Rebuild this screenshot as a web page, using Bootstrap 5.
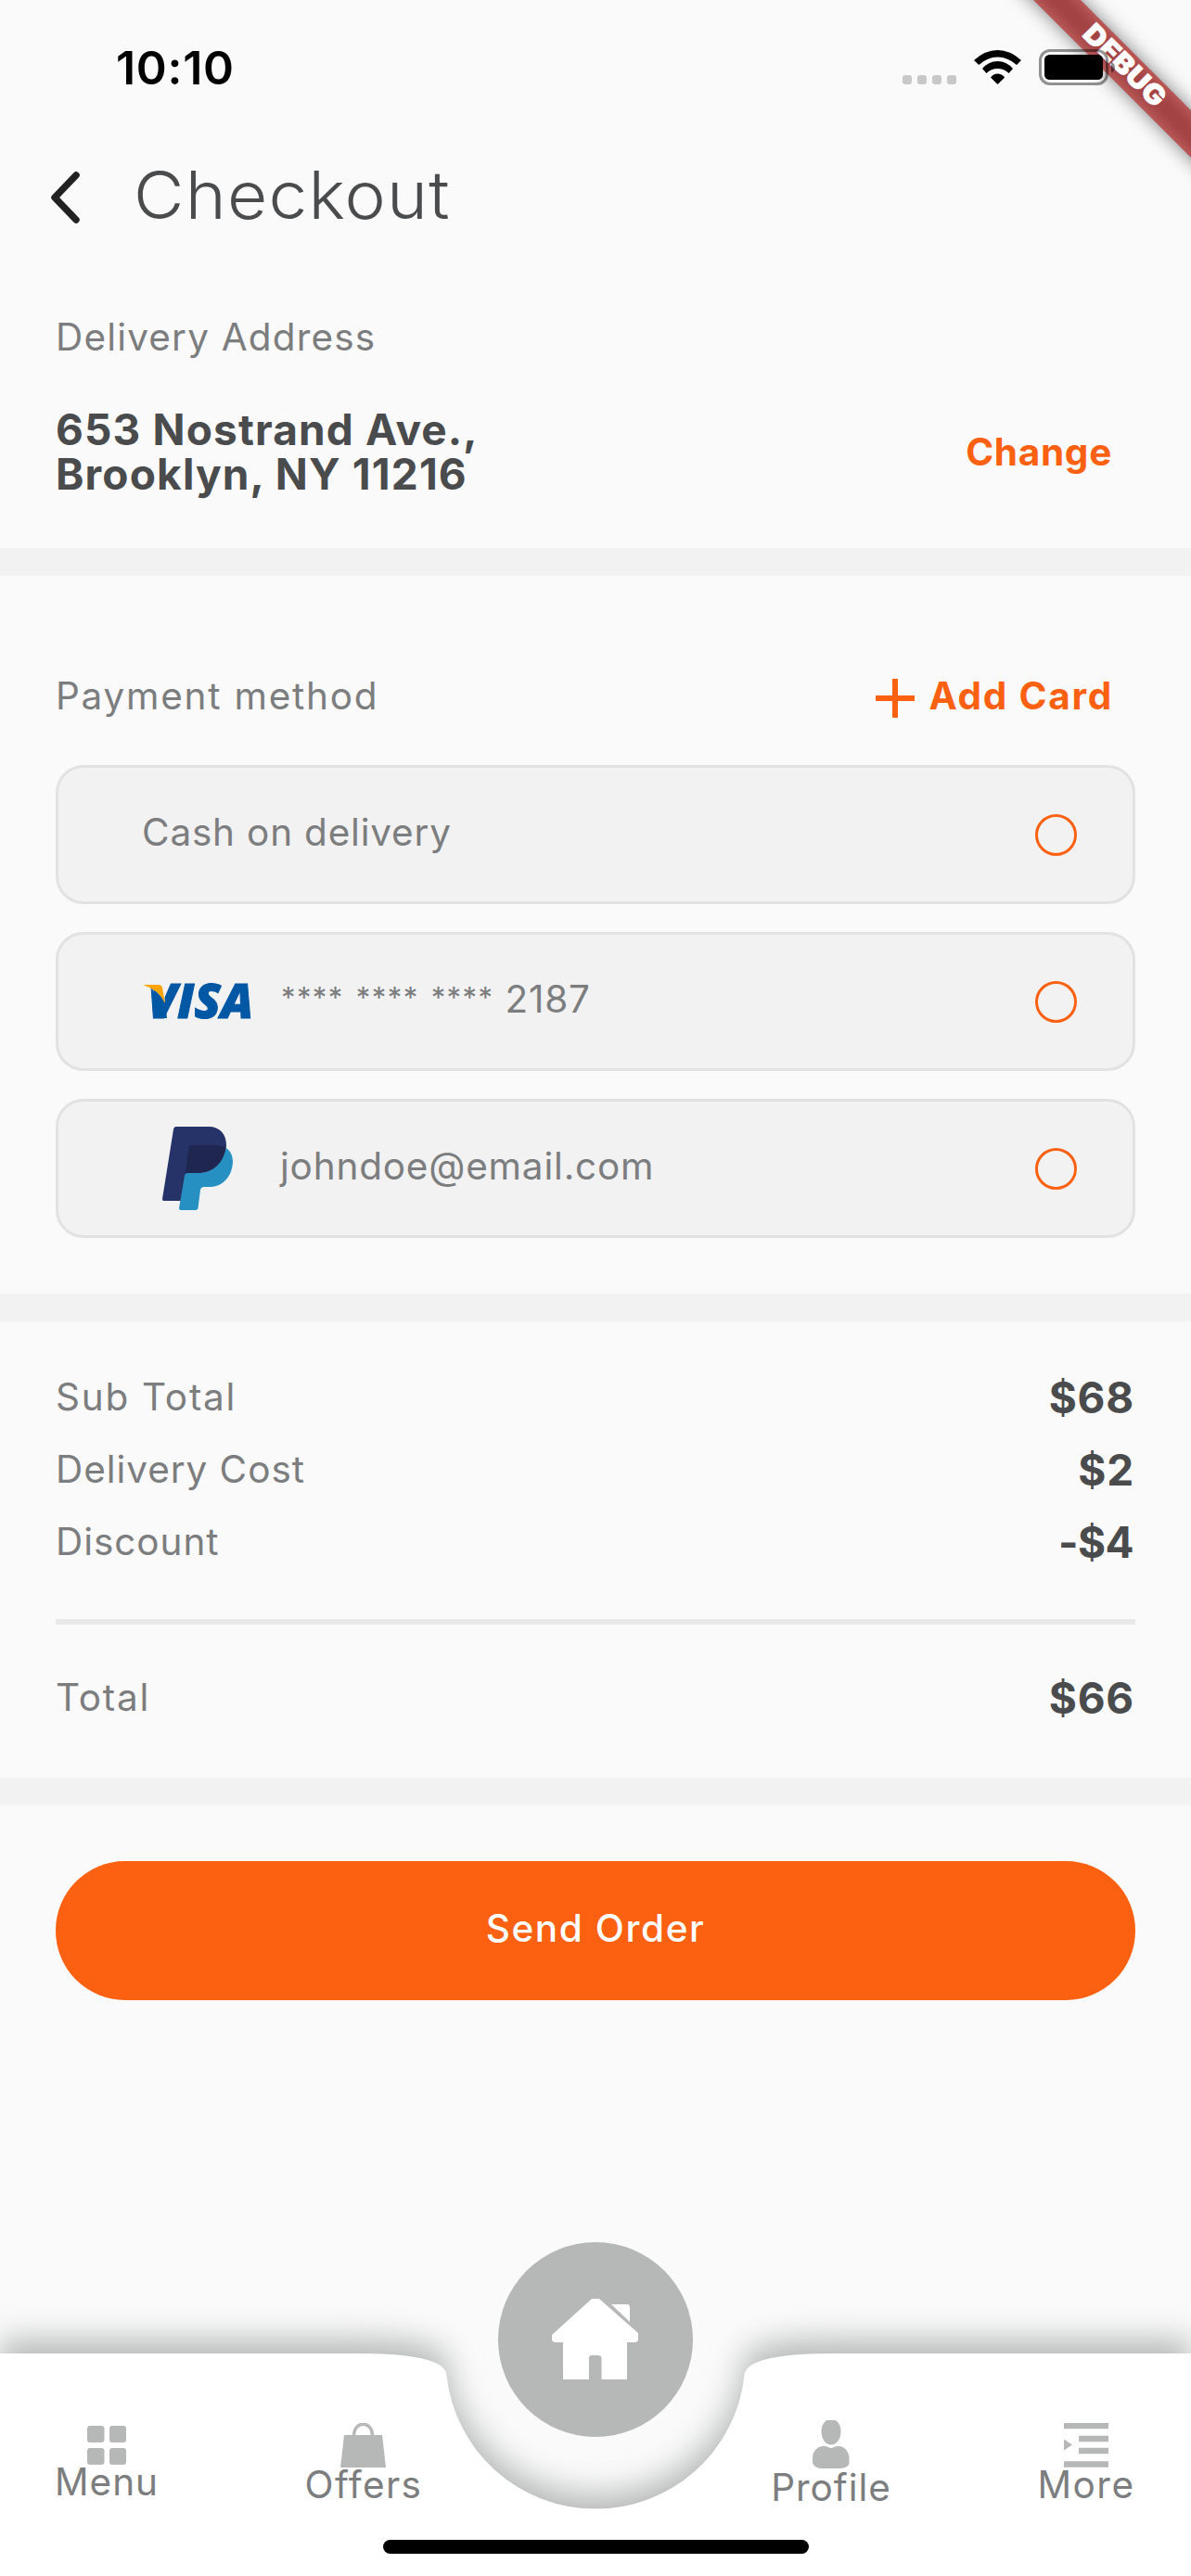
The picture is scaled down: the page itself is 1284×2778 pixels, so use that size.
<!DOCTYPE html>
<html lang="en">
<head>
<meta charset="utf-8">
<title>Checkout</title>
<link href="https://cdn.jsdelivr.net/npm/bootstrap@5.3.0/dist/css/bootstrap.min.css" rel="stylesheet">
<style>
  body { background: #fafafa; color: #7c7d7e; font-family: Inter, "Open Sans", sans-serif; font-size: 40.5px; line-height: 43px; letter-spacing: .95px; }
  .screen { width: 1284px; height: 2778px; white-space: nowrap; }
  svg { display: block; flex: none; }
  .ink { color: #4a4b4d; }
  .accent { color: #fc6011; }
  .strong-line { font-size: 46px; line-height: 48px; font-weight: 700; letter-spacing: 1.15px; }
  .track-1 { letter-spacing: 1.18px; }
  .track-2 { letter-spacing: 1.75px; }

  .statusbar { height: 140px; padding: 0 82px 0 125px; color: #000; z-index: 3; }
  .clock { font-size: 50px; font-weight: 600; line-height: 146px; letter-spacing: .7px; }
  .status-icons { padding-top: 53px; }
  .debug-ribbon { z-index: 2; }

  .titlebar { height: 140px; padding-left: 52px; }
  .back-icon { margin-top: 6px; }
  .title-text { font-size: 71.5px; font-weight: 350; line-height: 142px; letter-spacing: 1.2px; margin: 0 0 0 58px; transform: scaleX(1.045); transform-origin: left center; }

  .pad { padding-left: 60px; padding-right: 60px; }
  .address { height: 311px; padding-top: 62px; }
  .address-row { margin-top: 54px; }
  .change-link { letter-spacing: .7px; padding-right: 25px; }
  .band { height: 30px; background: #f2f2f2; }

  .payment { height: 774px; padding-top: 102px; }
  .payment-head { height: 60px; margin-bottom: 42px; padding-right: 24px; }
  .lift { padding-bottom: 5px; }
  .cards { gap: 30px; }
  .pay-card { height: 150px; border: 3px solid #e2e2e2; border-radius: 30px; background: #f2f2f2; padding: 0 60px 0 90px; }
  .pay-card .lift { letter-spacing: .8px; }
  .ring { width: 45px; height: 45px; border: 3px solid #fc6011; border-radius: 50%; }
  .visa-logo { overflow: visible; }
  .visa-label { margin-left: 28px; }
  .stars { font-size: 31px; letter-spacing: 1.4px; word-spacing: 3px; vertical-align: 5px; line-height: 30px; margin-right: 12px; }
  .paypal-logo { margin-left: 22px; }
  .paypal-label { margin-left: 51px; }

  .totals { height: 492px; padding-top: 42px; }
  .total-row { height: 78px; }
  .amount { font-size: 46px; font-weight: 700; color: #4a4b4d; padding: 3px 1px 0 0; letter-spacing: .8px; }
  .amount-off { letter-spacing: -.6px; padding-right: 2px; }
  .rule { height: 6px; background: #e8e8e8; margin: 45px 0 39px; }

  .send { margin-top: 60px; height: 150px; border-radius: 75px; border: 0; background: #fc6011; color: #fff; font-size: 40.5px; font-weight: 500; letter-spacing: 1.6px; }
  .send .lift { padding-bottom: 4px; }

  .tabbar { height: 240px; }
  .tabbar-shape { position: absolute; left: 0; bottom: 0; }
  .home-button { position: absolute; left: 537px; top: -120px; width: 210px; height: 210px; border-radius: 50%; background: #b6b7b7; }
  .tabs { position: relative; padding: 72px 60px 0 59px; }
  .tabs-left { gap: 157px; }
  .tabs-right { gap: 157px; }
  .tab-item { line-height: 42px; }
  .tab-menu { width: 112px; padding-top: 6px; }
  .tab-offers { width: 128px; padding-top: 3px; letter-spacing: 1.39px; }
  .tab-profile { width: 130px; }
  .tab-more { width: 106px; padding-top: 3px; letter-spacing: 1.5px; }
  .tab-item svg { margin-bottom: -2px; }
  .home-line { position: absolute; left: 413px; bottom: 24px; width: 459px; height: 15px; border-radius: 8px; background: #000; }
</style>
<script src="https://cdn.jsdelivr.net/npm/bootstrap@5.3.0/dist/js/bootstrap.bundle.min.js"></script>
</head>
<body>
<main class="screen position-relative overflow-hidden d-flex flex-column">

  <header class="statusbar position-relative d-flex justify-content-between">
    <div class="clock">10:10</div>
    <div class="status-icons d-flex">
      <svg width="229" height="40" viewBox="973 53 229 40">
        <g fill="#c8c8c8">
          <rect x="973" y="81" width="10" height="10" rx="3"/><rect x="989" y="81" width="10" height="10" rx="3"/>
          <rect x="1005" y="81" width="10" height="10" rx="3"/><rect x="1021" y="81" width="10" height="10" rx="3"/>
        </g>
        <path d="M1050 65Q1062 54 1075.500 54T1101 65L1096 70Q1086.500 61.500 1075.500 61.500T1055.300 70Z"/>
        <path d="M1059 74Q1066 66 1075.500 66T1092 74L1087.500 79Q1082.500 74 1075.500 74T1063.500 79Z"/>
        <path d="M1068 83.500Q1071 79.500 1075.500 79.500T1083.200 83.500L1075.500 91Z"/>
        <rect x="1121.500" y="54.500" width="72" height="36" rx="10.500" fill="none" stroke="#000" stroke-opacity=".42" stroke-width="3"/>
        <rect x="1126" y="59" width="63" height="27" rx="5.500"/>
        <path d="M1198 66.500Q1202 68.500 1202 72.500T1198 78.500Z" fill-opacity=".45"/>
      </svg>
    </div>
  </header>

  <svg class="debug-ribbon position-absolute top-0 end-0" width="230" height="230" viewBox="1054 0 230 230">
    <defs><filter id="ribbonBlur" x="-50%" y="-50%" width="200%" height="200%"><feGaussianBlur stdDeviation="10"/></filter></defs>
    <path d="M1054 -60L1344 230V179L1105 -60Z" fill="#000" fill-opacity=".5" filter="url(#ribbonBlur)"/>
    <path d="M1114 0H1165L1284 119V170Z" fill="#b71c1c" fill-opacity=".627"/>
    <text transform="translate(1213 70) rotate(45)" x="0" y="11" text-anchor="middle" fill="#fff" stroke="#fff" stroke-width=".6" font-family="Inter, sans-serif" font-weight="900" font-size="30" letter-spacing="0" textLength="112" lengthAdjust="spacingAndGlyphs">DEBUG</text>
  </svg>

  <div class="titlebar d-flex align-items-center">
    <svg class="back-icon" width="34" height="58" viewBox="0 0 34 58"><path d="M30 5L7 29L30 53" fill="none" stroke="#212121" stroke-width="7.500" stroke-linecap="round" stroke-linejoin="round"/></svg>
    <h1 class="title-text ink">Checkout</h1>
  </div>

  <section class="address pad">
    <div class="track-1">Delivery Address</div>
    <div class="address-row d-flex justify-content-between align-items-center">
      <div class="strong-line ink">653 Nostrand Ave.,<br>Brooklyn, NY 11216</div>
      <a class="change-link accent fw-bold text-decoration-none" href="#">Change</a>
    </div>
  </section>
  <div class="band"></div>

  <section class="payment pad">
    <div class="payment-head d-flex justify-content-between align-items-center">
      <div class="lift track-2">Payment method</div>
      <a class="accent fw-bold text-decoration-none d-flex align-items-center track-2" href="#">
        <svg width="42" height="42" viewBox="0 0 42 42"><path d="M21 0V42M0 21H42" stroke="#fc6011" stroke-width="6"/></svg>
        <span class="lift ms-3">Add Card</span>
      </a>
    </div>
    <div class="cards d-grid">
      <div class="pay-card d-flex justify-content-between align-items-center">
        <span class="lift">Cash on delivery</span><span class="ring"></span>
      </div>
      <div class="pay-card d-flex justify-content-between align-items-center">
        <div class="d-flex align-items-center">
          <svg class="visa-logo" width="122" height="70" viewBox="153 1045 122 70">
            <text x="159" y="1098" font-family="Open Sans, sans-serif" font-weight="800" font-style="italic" font-size="50.500" letter-spacing="0" fill="#0057a4" stroke="#0057a4" stroke-width="1" textLength="114" lengthAdjust="spacingAndGlyphs">VISA</text>
            <path d="M160 1060H176L178 1083L170 1076L164 1066Z" fill="#f2f2f2"/>
            <path d="M165.500 1067Q174 1073 178 1081L180 1098H172.500Z" fill="#0057a4"/>
            <path d="M155 1062H171Q174.500 1062 175.200 1066L178 1082Q171 1067 155 1062.500Z" fill="#ffa400"/>
          </svg>
          <div class="lift visa-label"><span class="stars">**** **** ****</span>2187</div>
        </div>
        <span class="ring"></span>
      </div>
      <div class="pay-card d-flex justify-content-between align-items-center">
        <div class="d-flex align-items-center">
          <svg class="paypal-logo" width="76" height="90" viewBox="0 0 76 90">
            <path d="M12 3Q12.500 0 15 0H50C62 0 69 8 69 20C68 40 54 50 38 50H27L20 80H1.500Q0 80 0 78Z" fill="#253368"/>
            <path d="M68.500 23C74 26 76 32 76 38C75 56 63 65 52 65H45Q42 65 41 68L38.500 88Q38 90 36 90H20Q18 90 18 88L24 53Q24.500 50 27 50H38C56 50 66 38 68.500 23Z" fill="#2790c3"/>
            <path d="M31 20H59Q65 20.500 68.500 22.500C66 38 56 50 38 50H27Q25.500 50 25 50.500L28.500 23Q28.700 20 31 20Z" fill="#1f264f"/>
          </svg>
          <span class="lift paypal-label">johndoe@email.com</span>
        </div>
        <span class="ring"></span>
      </div>
    </div>
  </section>
  <div class="band"></div>

  <section class="totals pad">
    <div class="total-row d-flex justify-content-between align-items-center"><span class="track-2">Sub Total</span><span class="amount">$68</span></div>
    <div class="total-row d-flex justify-content-between align-items-center"><span>Delivery Cost</span><span class="amount">$2</span></div>
    <div class="total-row d-flex justify-content-between align-items-center"><span>Discount</span><span class="amount amount-off">-$4</span></div>
    <div class="rule"></div>
    <div class="total-row d-flex justify-content-between align-items-center"><span class="track-2">Total</span><span class="amount">$66</span></div>
  </section>
  <div class="band"></div>

  <div class="pad d-grid">
    <button class="send btn" type="button"><span class="lift d-block">Send Order</span></button>
  </div>

  <nav class="tabbar position-relative mt-auto">
    <svg class="tabbar-shape" width="1284" height="360" viewBox="0 2418 1284 360">
      <defs><filter id="navBlur" filterUnits="userSpaceOnUse" x="-100" y="2400" width="1484" height="500"><feGaussianBlur stdDeviation="17"/></filter></defs>
      <path transform="translate(0 -15)" d="M0 2538H385Q481.500 2538 481.500 2562A161.500 161.500 0 0 0 802.500 2562Q802.500 2538 899 2538H1284V2820H0Z" fill="#b6b7b7" filter="url(#navBlur)"/>
      <path d="M0 2538H385Q481.500 2538 481.500 2562A161.500 161.500 0 0 0 802.500 2562Q802.500 2538 899 2538H1284V2778H0Z" fill="#fff"/>
    </svg>
    <div class="home-button d-flex align-items-center justify-content-center">
      <svg width="94" height="88" viewBox="595 2479 94 88">
        <path d="M638 2479H646L688 2516V2524Q687 2526 684 2526H676V2566H648.500V2543Q648.500 2540 645 2540H638Q635 2540 635 2543V2566H607V2526H598Q595 2525 595 2523V2518Z" fill="#fff"/>
        <path d="M659 2485H676Q679 2485 679 2488V2504Z" fill="#fff"/>
      </svg>
    </div>
    <div class="tabs d-flex justify-content-between">
      <div class="tabs-left d-flex align-items-start">
        <div class="tab-item tab-menu d-flex flex-column align-items-center">
          <svg width="42" height="42" viewBox="0 0 42 42" fill="#b6b7b7"><rect width="18.500" height="18" rx="3"/><rect x="24" width="18" height="18" rx="3"/><rect y="24" width="18.500" height="18" rx="3"/><rect x="24" y="24" width="18" height="18" rx="3"/></svg>
          <span>Menu</span>
        </div>
        <div class="tab-item tab-offers d-flex flex-column align-items-center">
          <svg width="50" height="48" viewBox="0 0 50 48"><path d="M4 13H45L49 48H0Z" fill="#b6b7b7"/><path d="M14.500 14C14.500 -3 34.500 -3 34.500 14" fill="none" stroke="#b6b7b7" stroke-width="3.500"/></svg>
          <span>Offers</span>
        </div>
      </div>
      <div class="tabs-right d-flex align-items-start">
        <div class="tab-item tab-profile d-flex flex-column align-items-center">
          <svg width="40" height="54" viewBox="0 0 40 54" fill="#b6b7b7"><ellipse cx="20" cy="12.500" rx="10.500" ry="14"/><path d="M10 28Q15 27.500 17 29Q20 31 23 29Q25 27.500 30 28Q38 30 39.500 40V47Q38 52 28 52H11Q2 52 0 46V40Q1 30 10 28Z"/></svg>
          <span>Profile</span>
        </div>
        <div class="tab-item tab-more d-flex flex-column align-items-center">
          <svg width="48" height="48" viewBox="0 0 48 48"><path d="M0 3H48M16 17H48M16 30H48M0 44.500H48" stroke="#b6b7b7" stroke-width="6.500"/><path d="M0 17.500L9 23.500L0 29.500Z" fill="#b6b7b7"/></svg>
          <span>More</span>
        </div>
      </div>
    </div>
    <div class="home-line"></div>
  </nav>
</main>
</body>
</html>
